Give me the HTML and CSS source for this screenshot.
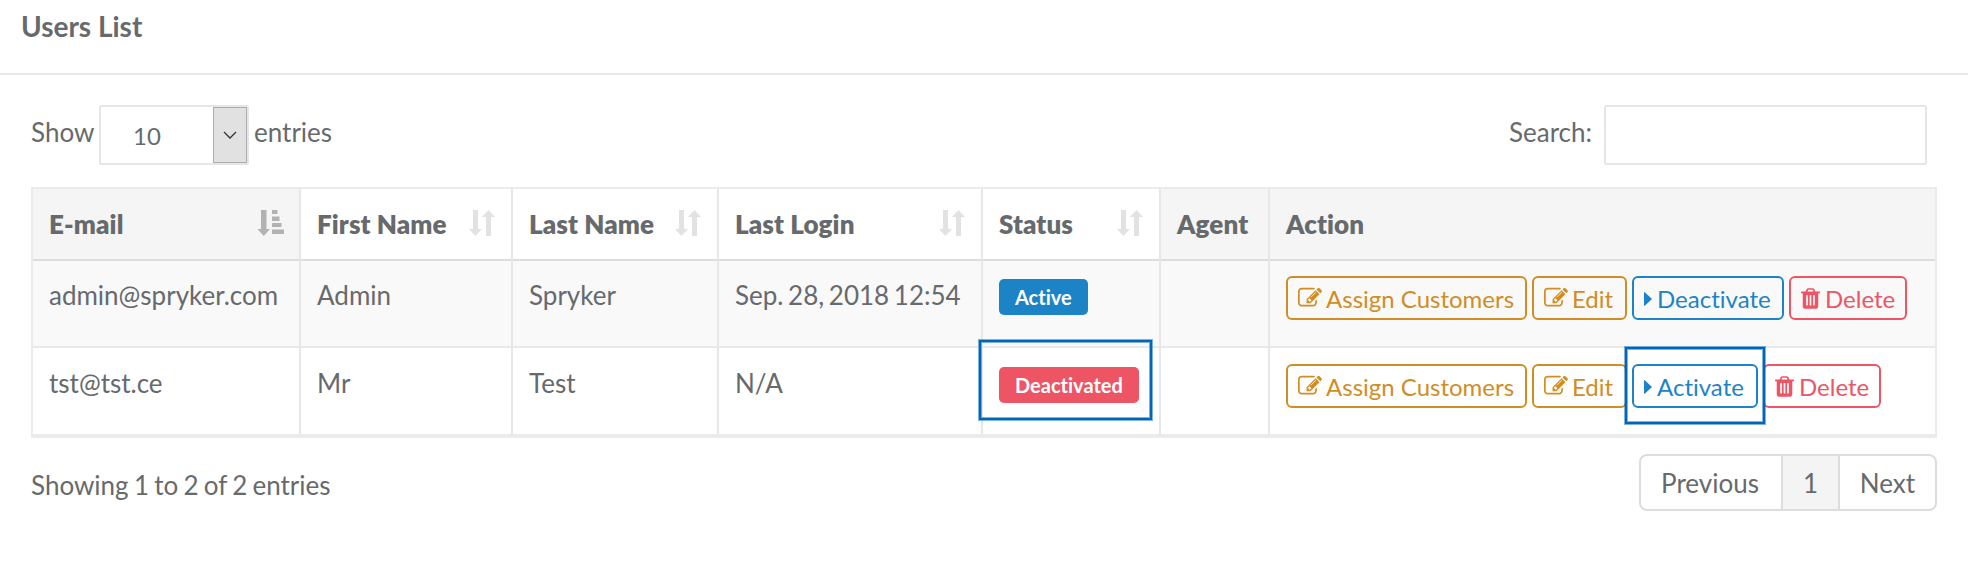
FILE: index.html
```html
<!DOCTYPE html>
<html lang="en">
<head>
<meta charset="utf-8">
<title>Users List</title>
<link rel="stylesheet" href="styles.css">
</head>
<body>
<svg width="0" height="0" class="sprite" aria-hidden="true">
  <symbol id="sort" viewBox="0 0 26 26"><path d="M4 0h5v19h4l-6.500 7L0 19h4zM17 26h5V7h4L19.500 0 13 7h4z"/></symbol>
  <symbol id="sort-asc" viewBox="0 0 26 26"><path d="M3.500 0h5.500v19h3.500L6.250 26 0 19h3.500zM14.500 0h5.500v4h-5.500zM14.500 6.500h7.500v4.500h-7.500zM14.500 13h9.500v4h-9.500zM14.500 19.500h12v4.500h-12z"/></symbol>
  <symbol id="edit" viewBox="0 0 1792 1792"><path d="M888 1184l116-116-152-152-116 116v56h96v96h56zm440-720q-16-16-33 1l-350 350q-17 17-1 33t33-1l350-350q17-17 1-33zm80 594v190q0 119-84.500 203.500t-203.500 84.500h-832q-119 0-203.500-84.500t-84.500-203.500v-832q0-119 84.500-203.500t203.500-84.500h832q63 0 117 25 15 7 18 23 3 17-9 29l-49 49q-14 14-32 8-23-6-45-6h-832q-66 0-113 47t-47 113v832q0 66 47 113t113 47h832q66 0 113-47t47-113v-126q0-13 9-22l64-64q15-15 35-7t20 29zm-96-738l288 288-672 672h-288v-288zm444 132l-92 92-288-288 92-92q28-28 68-28t68 28l152 152q28 28 28 68t-28 68z"/></symbol>
  <symbol id="trash" viewBox="192 128 1408 1536"><path d="M704 1376v-704q0-14-9-23t-23-9h-64q-14 0-23 9t-9 23v704q0 14 9 23t23 9h64q14 0 23-9t9-23zm256 0v-704q0-14-9-23t-23-9h-64q-14 0-23 9t-9 23v704q0 14 9 23t23 9h64q14 0 23-9t9-23zm256 0v-704q0-14-9-23t-23-9h-64q-14 0-23 9t-9 23v704q0 14 9 23t23 9h64q14 0 23-9t9-23zm-544-992h448l-48-117q-7-9-17-11h-317q-10 2-17 11zm928 32v64q0 14-9 23t-23 9h-96v948q0 83-47 143.500t-113 60.500h-832q-66 0-113-58.500t-47-141.500v-952h-96q-14 0-23-9t-9-23v-64q0-14 9-23t23-9h309l70-167q15-37 54-63t79-26h320q40 0 79 26t54 63l70 167h309q14 0 23 9t9 23z"/></symbol>
  <symbol id="caret" viewBox="0 0 8 14"><path d="M0 .7Q0-.5 1 .4l6.500 6q.7.600 0 1.200l-6.500 6Q0 14.500 0 13.300z"/></symbol>
</svg>

<header class="title"><h5>Users List</h5></header>

<main class="content">
  <div class="toolbar">
    <div class="length">
      <span class="show">Show</span>
      <div class="select"><span class="value">10</span><span class="arrow"><svg viewBox="0 0 14 8"><path d="M1 1l6 6 6-6"/></svg></span></div>
      <span>entries</span>
    </div>
    <label class="search"><span>Search:</span><input type="text"></label>
  </div>

  <div class="table">
    <div class="row head">
      <div class="cell shaded">E-mail<svg class="sorter on"><use href="#sort-asc"/></svg></div>
      <div class="cell">First Name<svg class="sorter"><use href="#sort"/></svg></div>
      <div class="cell">Last Name<svg class="sorter"><use href="#sort"/></svg></div>
      <div class="cell">Last Login<svg class="sorter"><use href="#sort"/></svg></div>
      <div class="cell">Status<svg class="sorter"><use href="#sort"/></svg></div>
      <div class="cell shaded">Agent</div>
      <div class="cell shaded">Action</div>
    </div>
    <div class="row odd">
      <div class="cell">admin@spryker.com</div>
      <div class="cell">Admin</div>
      <div class="cell">Spryker</div>
      <div class="cell date">Sep. 28, 2018 12:54</div>
      <div class="cell"><span class="label info">Active</span></div>
      <div class="cell"></div>
      <div class="cell actions">
        <a class="btn warn w-assign"><svg class="i-edit"><use href="#edit"/></svg>Assign Customers</a>
        <a class="btn warn w-edit"><svg class="i-edit"><use href="#edit"/></svg>Edit</a>
        <a class="btn view w-deact"><svg class="i-caret"><use href="#caret"/></svg>Deactivate</a>
        <a class="btn danger w-del"><svg class="i-trash"><use href="#trash"/></svg>Delete</a>
      </div>
    </div>
    <div class="row">
      <div class="cell">tst@tst.ce</div>
      <div class="cell">Mr</div>
      <div class="cell">Test</div>
      <div class="cell">N/A</div>
      <div class="cell"><span class="label bad">Deactivated<i class="mark mark-label"></i></span></div>
      <div class="cell"></div>
      <div class="cell actions">
        <a class="btn warn w-assign"><svg class="i-edit"><use href="#edit"/></svg>Assign Customers</a>
        <a class="btn warn w-edit"><svg class="i-edit"><use href="#edit"/></svg>Edit</a>
        <a class="btn view w-act"><svg class="i-caret"><use href="#caret"/></svg>Activate<i class="mark mark-btn"></i></a>
        <a class="btn danger w-del"><svg class="i-trash"><use href="#trash"/></svg>Delete</a>
      </div>
    </div>
  </div>

  <footer class="bottom">
    <div class="info-text">Showing 1 to 2 of 2 entries</div>
    <nav class="pages"><a class="prev">Previous</a><a class="current">1</a><a class="next">Next</a></nav>
  </footer>
</main>
</body>
</html>
```
FILE: styles.css
```css
* { box-sizing: border-box; }
body { margin: 0; background: #fff; color: #676a6c; font: 26px/36px Lato, sans-serif; font-variant-ligatures: none; overflow: hidden; white-space: nowrap; }
.sprite { position: absolute; }
svg { fill: currentColor; flex: none; }

.title { height: 75px; border-bottom: 2px solid #e7eaec; padding: 9px 21px; }
.title h5 { margin: 0; font-size: 28px; line-height: 34px; font-weight: 700; }

.content { padding: 30px 31px 0; }
.toolbar { display: flex; justify-content: space-between; height: 82px; line-height: 54px; }
.length { display: flex; gap: 5px; }
.show { width: 63px; }
.select { display: flex; width: 150px; height: 60px; border: 2px solid #e5e6e7; border-radius: 2px; font-size: 24px; line-height: 58px; }
.select .value { flex: 1; padding-left: 32px; }
.select .arrow { display: flex; align-items: center; justify-content: center; width: 34px; border: 1px solid #adadad; background: #e1e1e1; }
.arrow svg { width: 14px; height: 8px; fill: none; stroke: #333; stroke-width: 1.300; }
.search { display: flex; gap: 12px; padding-right: 10px; }
.search input { width: 323px; height: 60px; border: 2px solid #e5e6e7; border-radius: 2px; background: #fff; }

.table { border: 2px solid #ebebeb; }
.row { display: grid; grid-template-columns: 268px 212px 206px 264px 178px 109px 1fr; height: 88px; }
.odd { background: #f9f9f9; }
.cell { padding: 17px 16px; border-right: 2px solid #e7e7e7; border-bottom: 2px solid #e7eaec; }
.cell:last-child { border-right: 0; }
.row:last-child .cell { border-bottom-color: #ebebeb; }
.head { height: 71px; font-weight: 800; letter-spacing: .1px; }
.head .cell { display: flex; justify-content: space-between; padding: 17px 16px; border-bottom-color: #ddd; }
.shaded { background: #f5f5f6; }
.sorter { width: 26px; height: 26px; margin-top: 4px; color: #e2e2e2; }
.sorter.on { color: #b1b2b3; width: 27px; margin-right: -1px; }
.date { word-spacing: -2px; }

.label { position: relative; display: block; width: max-content; height: 36px; margin-top: 2px; padding: 0 16px; border-radius: 5px; color: #fff; font-size: 20px; line-height: 37px; font-weight: 700; }
.info { background: #1c84c6; }
.bad { background: #ed5565; }

.actions { display: flex; gap: 5px; padding-top: 16px; }
.btn { position: relative; display: flex; align-items: center; height: 44px; padding-left: 9px; border: 2px solid; border-radius: 6px; font-size: 24px; line-height: 42px; padding-top: 2px; }
.warn { color: #d18d24; }
.view { color: #1c84c6; }
.danger { color: #ed5565; }
.w-assign { width: 241px; }
.w-edit { width: 95px; }
.w-deact { width: 152px; }
.w-act { width: 126px; }
.w-del { width: 118px; }
.i-edit { width: 24px; height: 24px; margin: 0 4px 2px 1px; }
.i-caret { width: 8px; height: 14px; margin: 0 5px 0 1px; }
.i-trash { width: 19px; height: 21px; margin: 0 5px 2px 1px; }
.mark { position: absolute; border: 2px solid #0067b8; box-shadow: 0 0 0 1px #0067b880, inset 0 0 0 1px #0067b880; }
.mark-label { left: -20px; top: -27px; width: 173px; height: 80px; }
.mark-btn { left: -9px; top: -19px; width: 140px; height: 77px; z-index: 1; }

.bottom { display: flex; justify-content: space-between; padding-top: 16px; }
.info-text { padding-top: 13px; word-spacing: -1.400px; }
.pages { display: flex; width: 298px; height: 57px; border: 2px solid #ddd; border-radius: 8px; line-height: 54px; overflow: hidden; }
.pages a { border-right: 2px solid #ddd; text-align: center; }
.pages .prev { width: 142px; padding-right: 2px; }
.current { width: 57px; background: #f4f4f4; }
.pages .next { flex: 1; border: 0; }
```
